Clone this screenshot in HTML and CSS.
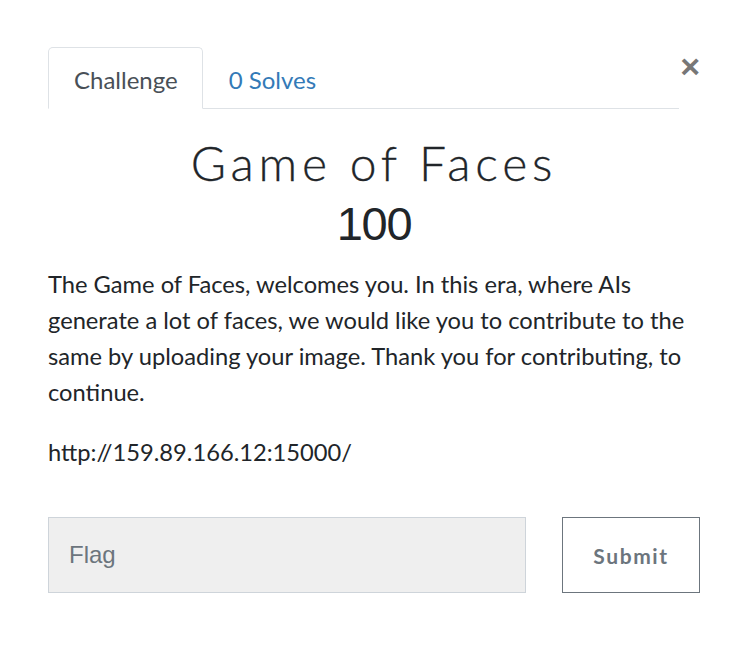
FILE: index.html
```html
<!DOCTYPE html>
<html>
<head>
<meta charset="utf-8">
<link rel="stylesheet" href="styles.css">
</head>
<body>
<div class="modal">
  <div class="header">
    <ul class="tabs">
      <li class="tab active">Challenge</li>
      <li class="tab link">0 Solves</li>
    </ul>
    <button class="close">&times;</button>
  </div>
  <h3 class="title">Game of Faces</h3>
  <h4 class="value">100</h4>
  <p class="desc">The Game of Faces, welcomes you. In this era, where AIs generate a lot of faces, we would like you to contribute to the same by uploading your image. Thank you for contributing, to continue.</p>
  <p class="desc url">http://159.89.166.12:15000/</p>
  <div class="form">
    <input class="flag" type="text" placeholder="Flag">
    <button class="submit">Submit</button>
  </div>
</div>
</body>
</html>
```
FILE: styles.css
```css
html, body { margin: 0; padding: 0; background: #fff; }
body { font-family: "Lato", sans-serif; color: #212529; }
.modal { padding: 47px 40px 0 48px; width: 652px; }
.header { display: flex; align-items: flex-start; }
.tabs { list-style: none; margin: 0; padding: 0; display: flex; flex: 1; border-bottom: 1px solid #dee2e6; height: 61px; }
.tab { font-size: 24px; padding: 3px 24px 0 25px; line-height: 57px; border: 1px solid transparent; border-top-left-radius: 5px; border-top-right-radius: 5px; }
.tab.active { color: #495057; border-color: #dee2e6 #dee2e6 #fff; background: #fff; height: 57px; }
.tab.link { color: #337ab7; }
.close { background: none; border: 0; padding: 0; width: 21px; margin-top: 2px; font-size: 34px; line-height: 34px; color: #777; font-family: "Liberation Sans", sans-serif; font-weight: bold; text-align: right; }
.title { font-family: "Lato", sans-serif; font-weight: 300; font-size: 48px; letter-spacing: 4.8px; text-align: center; margin: 26px 0 0; line-height: 56px; color: #212529; -webkit-text-stroke: 0.3px #212529; }
.value { font-family: "Liberation Sans", sans-serif; font-weight: 400; font-size: 47px; letter-spacing: -1.3px; text-align: center; margin: 5px 0 0; line-height: 56px; color: #212529; }
.desc { font-size: 23.7px; line-height: 36px; margin: 14px 0 0; }
.desc.url { margin-top: 24px; }
.form { display: flex; justify-content: space-between; margin-top: 47px; }
.flag { width: 478px; height: 76px; box-sizing: border-box; background: #efefef; border: 1px solid #ced4da; padding: 0 20px; font-size: 24px; font-family: "Liberation Sans", sans-serif; color: #495057; outline: none; }
.flag::placeholder { color: #6c757d; }
.submit { width: 138px; height: 76px; box-sizing: border-box; background: #fff; border: 1px solid #6c757d; color: #6c757d; font-family: "Lato", sans-serif; font-weight: 700; font-size: 21px; letter-spacing: 1.6px; }
```
